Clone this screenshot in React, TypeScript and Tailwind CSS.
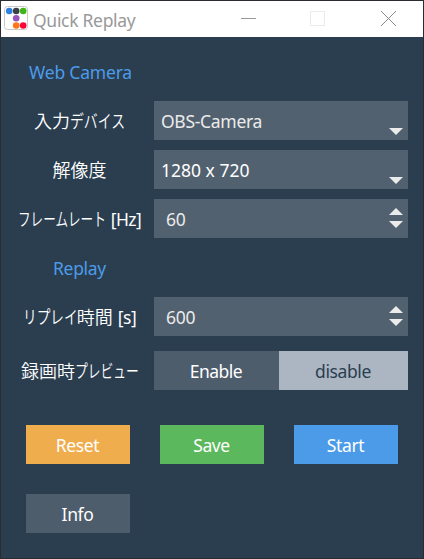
import type { ReactNode } from "react";

const DOTS = [
  { x: 5.2, y: 5, fill: "#2c80de" },
  { x: 12.2, y: 5, fill: "#3b3f46" },
  { x: 19.2, y: 5, fill: "#3fb618" },
  { x: 12.2, y: 12.2, fill: "#9954bb" },
  { x: 12.2, y: 19.5, fill: "#ff7518" },
  { x: 19.2, y: 19.5, fill: "#ff0039" },
];

function AppIcon() {
  return (
    <svg className="ml-[3px] shrink-0" width="25" height="26" viewBox="0 0 25 26">
      <rect x="0.5" y="0.5" width="23" height="23" rx="3" fill="#fff" stroke="#c9c9c9" />
      {DOTS.map((d) => (
        <circle key={d.fill} cx={d.x} cy={d.y} r="3.3" fill={d.fill} />
      ))}
    </svg>
  );
}

// Condensed katakana, as in a proportional UI face.
function Kana({ children, box, scale }: { children: string; box: string; scale: string }) {
  return (
    <span className={`inline-block ${box}`}>
      <span className={`inline-block origin-left ${scale}`}>{children}</span>
    </span>
  );
}

function Row({ label, children }: { label: ReactNode; children: ReactNode }) {
  return (
    <div className="flex h-[39px] items-center">
      <div className="flex h-full w-[147px] shrink-0 items-center justify-center pt-px pr-[2px] text-[18px] font-[350] whitespace-nowrap">{label}</div>
      {children}
    </div>
  );
}

function Arrow({ up = false }: { up?: boolean }) {
  return (
    <svg width="14" height="7" viewBox="0 0 14 7" className="block">
      <path d={up ? "M0 7 7 0 14 7Z" : "M0 0H14L7 7Z"} fill="#ebebeb" />
    </svg>
  );
}

function Select({ value, tone }: { value: string; tone: string }) {
  return (
    <div className={`flex h-full w-[254px] justify-between bg-[#52616f] pr-[5px] pl-[7px] ${tone}`}>
      <span className="self-center pt-px">{value}</span>
      <span className="mb-[5px] self-end"><Arrow /></span>
    </div>
  );
}

function Spin({ value }: { value: string }) {
  return (
    <div className="flex h-full w-[254px] justify-between bg-[#52616f] pr-[5px] pl-[12px] text-[#ebebeb]">
      <span className="self-center pt-px tracking-[-0.3px]">{value}</span>
      <span className="mt-[9px] flex flex-col gap-[6px]"><Arrow up /><Arrow /></span>
    </div>
  );
}

function Button({ label, color }: { label: string; color: string }) {
  return <button className={`h-[39px] w-[104px] pt-px pr-px tracking-[-0.4px] ${color}`}>{label}</button>;
}

export default function App() {
  return (
    <div className="flex h-[559px] w-[424px] flex-col overflow-hidden border border-[#292c30] bg-[#2b3e50] font-['Noto_Sans','Noto_Sans_CJK_JP',sans-serif] text-[17.5px] leading-[24px] font-normal text-white">
      <header className="flex h-[36px] shrink-0 items-center bg-white text-[#999]">
        <AppIcon />
        <span className="ml-[4px] grow pt-px tracking-[-0.3px]">Quick Replay</span>
        <svg width="190" height="36" viewBox="0 0 190 36" fill="none" shapeRendering="crispEdges">
          <path d="M8 17.5H23" stroke="#999" />
          <rect x="77.500" y="10.500" width="14" height="14" stroke="#ebebeb" />
          <path d="M148 10 163 25M163 10 148 25" stroke="#888" shapeRendering="auto" />
        </svg>
      </header>
      <main className="pl-[6px]">
        <div className="mt-[23px] h-[24px] w-[147px] text-center tracking-[-0.2px] text-[#4c9be8]">Web Camera</div>
        <div className="mt-[17px] flex flex-col gap-[10px]">
          <Row label={<>入力<Kana box="w-[55px]" scale="scale-x-[0.77]">デバイス</Kana></>}>
            <Select value="OBS-Camera" tone="text-[#ebebeb] tracking-[-0.3px]" />
          </Row>
          <Row label="解像度">
            <Select value="1280 x 720" tone="text-white" />
          </Row>
          <Row label={<><Kana box="w-[88px]" scale="scale-x-[0.7]">フレームレート</Kana><span className="ml-[5px] text-[17.5px] font-normal tracking-[-0.5px]">[Hz]</span></>}>
            <Spin value="60" />
          </Row>
        </div>
        <div className="mt-[18px] h-[24px] w-[147px] pr-[2px] text-center tracking-[-0.3px] text-[#4c9be8]">Replay</div>
        <div className="mt-[17px] flex flex-col gap-[15px]">
          <Row label={<><Kana box="w-[54px]" scale="scale-x-[0.76]">リプレイ</Kana>時間<span className="ml-[5px] text-[17.5px] font-normal tracking-[-0.5px]">[s]</span></>}>
            <Spin value="600" />
          </Row>
          <Row label={<>録画時<Kana box="w-[63px]" scale="scale-x-[0.71]">プレビュー</Kana></>}>
            <button className="h-full w-[125px] bg-[#4e5d6c] pt-px pr-px tracking-[-0.5px]">Enable</button>
            <button className="h-full w-[129px] bg-[#abb6c2] pt-px pr-px tracking-[-0.4px] text-[#2b3e50]">disable</button>
          </Row>
        </div>
        <div className="mt-[35px] ml-[19px] grid grid-cols-[104px_104px_104px] gap-[30px]">
          <Button label="Reset" color="bg-[#f0ad4e]" />
          <Button label="Save" color="bg-[#5cb85c]" />
          <Button label="Start" color="bg-[#4c9be8]" />
          <Button label="Info" color="bg-[#4e5d6c]" />
        </div>
      </main>
    </div>
  );
}
